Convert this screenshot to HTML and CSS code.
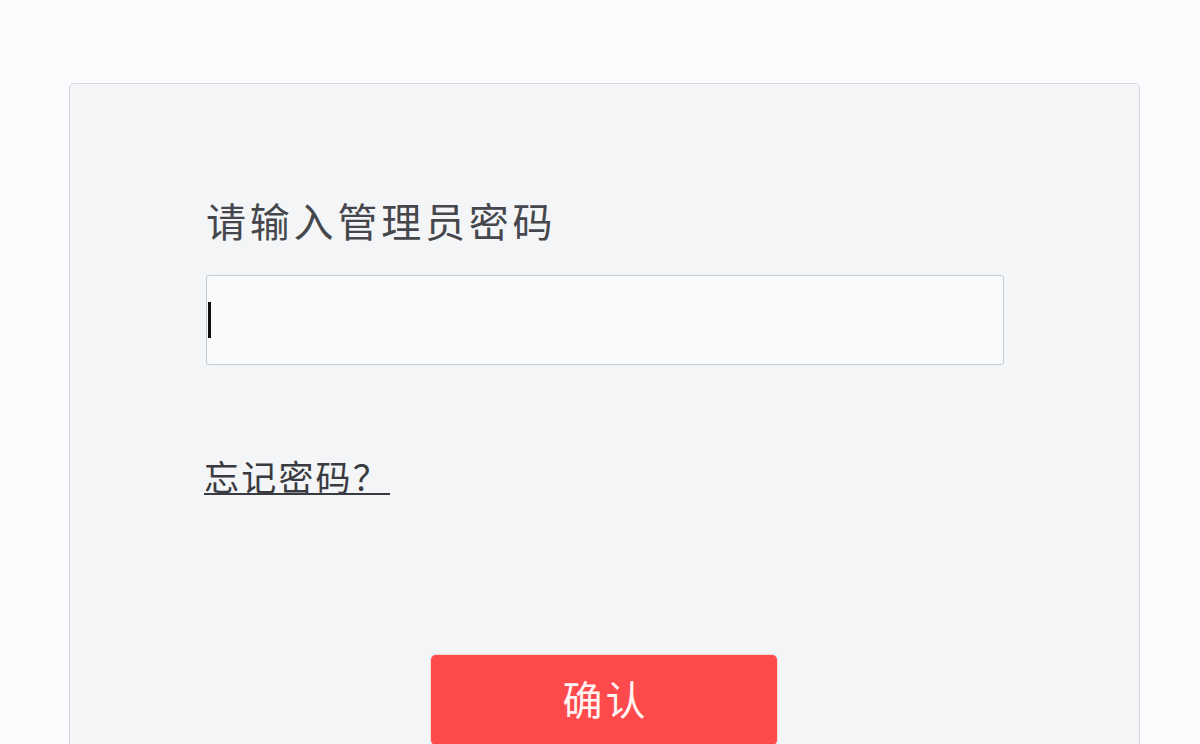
FILE: index.html
```html
<!DOCTYPE html>
<html lang="zh-CN">
<head>
<meta charset="utf-8">
<link rel="stylesheet" href="styles.css">
</head>
<body>
<div class="page">
  <div class="card">
    <div class="title">请输入管理员密码</div>
    <div class="input"><span class="caret"></span></div>
    <a class="forgot" href="#">忘记密码？</a>
    <div class="actions">
      <button class="confirm">确认</button>
    </div>
  </div>
</div>
</body>
</html>
```
FILE: styles.css
```css
html, body {
  margin: 0;
  padding: 0;
  background: #fbfbfd;
  font-family: "Noto Sans CJK SC", "Noto Sans", sans-serif;
}
.page {
  padding: 83px 0 0 69px;
  width: 1071px;
}
.card {
  box-sizing: border-box;
  width: 1071px;
  min-height: 720px;
  background: #f4f5f7;
  border: 1px solid #d4d7dc;
  border-radius: 5px;
  padding: 112px 135px 0 136px;
  display: flex;
  flex-direction: column;
  align-items: flex-start;
}
.title {
  font-size: 40px;
  line-height: 48px;
  letter-spacing: 3.8px;
  color: #45474c;
}
.input {
  box-sizing: border-box;
  margin-top: 31px;
  width: 798px;
  height: 90px;
  background: #f9fafc;
  border: 1px solid #c6c9ce;
  border-radius: 3px;
  display: flex;
  align-items: center;
  padding-left: 1px;
}
.caret {
  display: block;
  width: 3px;
  height: 36px;
  background: #111;
}
.forgot {
  margin-top: 90px;
  font-size: 35px;
  line-height: 42px;
  letter-spacing: 2.2px;
  color: #3a3b40;
  text-decoration: underline;
  text-decoration-thickness: 2px;
  text-underline-offset: 2px;
  margin-left: -2px;
}
.actions {
  align-self: stretch;
  display: flex;
  justify-content: center;
  margin-top: 158px;
}
.confirm {
  width: 346px;
  height: 90px;
  background: #fe4a4b;
  border: none;
  border-radius: 5px;
  color: #fff3f3;
  font-family: "Noto Sans CJK SC", "Noto Sans", sans-serif;
  font-size: 40px;
  letter-spacing: 3px;
  padding: 0 0 4px 3px;
  box-shadow: 0 0 2px rgba(230, 60, 60, 0.5);
  margin-left: -2px;
}
```
